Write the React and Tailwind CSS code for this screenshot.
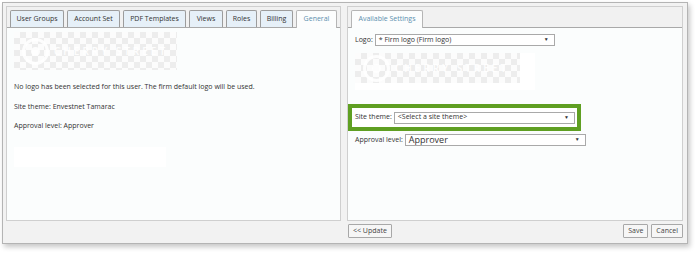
import React from 'react'

const checker =
  'bg-[repeating-conic-gradient(#ededed_0_25%,#fcfcfc_0_50%)] bg-[length:12px_12px]'

function Tab({ label, w, active }) {
  return (
    <div
      className={`h-[17px] flex items-center justify-center border border-b-0 rounded-t-[2px] text-[7px] ${w} ${
        active
          ? 'bg-[#fcfdfd] border-[#b5b5b5] text-[#5b8fae] h-[18px] -mb-px'
          : 'bg-[#e6f0f8] border-[#9c9c9c] text-[#333]'
      }`}
    >
      {label}
    </div>
  )
}

function LogoMark() {
  return (
    <div className={`relative w-full h-full overflow-hidden flex items-center gap-[5px] pl-[8px] ${checker}`}>
      <div className="shrink-0 w-[27px] h-[27px] rounded-full border-[3px] border-white/90 flex items-center justify-center">
        <div className="w-[9px] h-[9px] rounded-full bg-white/90" />
      </div>
      <span className="whitespace-nowrap text-[10px] tracking-[3px] text-white/90 font-semibold">CHERRY STREET</span>
    </div>
  )
}

function Select({ children, w, big }) {
  return (
    <div
      className={`h-[12px] border border-[#a9a9a9] bg-white flex items-center justify-between pl-[3px] pr-[5px] ${w}`}
    >
      <span className={big ? 'text-[9px] text-[#333]' : 'text-[7px] text-[#333]'}>{children}</span>
      <span className="text-[5px] text-[#333]">▼</span>
    </div>
  )
}

function Button({ children }) {
  return (
    <div className="h-[14px] px-[4px] flex items-center border border-[#a8a8a8] bg-[#f6f6f6] text-[7px] text-[#444] rounded-[1px]">
      {children}
    </div>
  )
}

export default function App() {
  return (
    <div className="w-[697px] h-[253px] bg-white pt-[2px] pl-[2px] font-['Open_Sans',sans-serif] text-[#333]">
      <div className="w-[686px] h-[242px] border border-[#b4b4b4] bg-[#f2f2f2] shadow-[2px_3px_5px_rgba(0,0,0,0.22)] flex gap-[6px] pt-[3px] pl-[3px]">
        {/* left panel */}
        <div className="w-[335px] h-[215px] border border-[#cfcfcf] bg-[#fbfdfd] flex flex-col">
          <div className="h-[21px] bg-[#f1f1f1] border-b border-[#a9a9a9] flex items-end gap-[3px] pl-[3px]">
            <Tab label="User Groups" w="w-[54px]" />
            <Tab label="Account Set" w="w-[53px]" />
            <Tab label="PDF Templates" w="w-[63px]" />
            <Tab label="Views" w="w-[34px]" />
            <Tab label="Roles" w="w-[31px]" />
            <Tab label="Billing" w="w-[33px]" />
            <Tab label="General" w="w-[41px]" active />
          </div>
          <div className="pl-[7px] pt-[4px] flex flex-col">
            <div className="w-[163px] h-[38px] flex">
              <LogoMark />
            </div>
            <div className="text-[7px] mt-[12px] leading-[10px]">
              No logo has been selected for this user. The firm default logo will be used.
            </div>
            <div className="text-[7px] mt-[10px] leading-[10px]">Site theme: Envestnet Tamarac</div>
            <div className="text-[7px] mt-[9px] leading-[10px]">Approval level: Approver</div>
            <div className="w-[152px] h-[20px] bg-white mt-[16px]" />
          </div>
        </div>

        {/* right panel */}
        <div className="flex flex-col">
          <div className="w-[336px] h-[215px] border border-[#cfcfcf] bg-[#fbfdfd] flex flex-col">
            <div className="h-[21px] bg-[#f1f1f1] border-b border-[#a9a9a9] flex items-end pl-[3px]">
              <Tab label="Available Settings" w="w-[72px]" active />
            </div>
            <div className="flex flex-col pt-[6px]">
              <div className="flex items-center gap-[2px] pl-[7px]">
                <span className="text-[7px]">Logo:</span>
                <Select w="w-[180px]">* Firm logo (Firm logo)</Select>
              </div>
              <div className="ml-[7px] mt-[7px] w-[180px] h-[37px] bg-white flex items-start">
                <div className="w-[165px] h-[30px] flex">
                  <LogoMark />
                </div>
              </div>
              <div className="mt-[14px] ml-0 w-[233px] h-[27px] border-[4px] border-[#5f9f22] bg-white flex items-center gap-[2px] pl-[3px]">
                <span className="text-[7px]">Site theme:</span>
                <Select w="w-[181px]">&lt;Select a site theme&gt;</Select>
              </div>
              <div className="flex items-center gap-[2px] pl-[7px] mt-[3px]">
                <span className="text-[7px]">Approval level:</span>
                <Select w="w-[181px]" big>Approver</Select>
              </div>
            </div>
          </div>
          <div className="flex justify-between pl-[1px] pr-[0px] mt-[3px]">
            <Button>&lt;&lt; Update</Button>
            <div className="flex gap-[3px]">
              <Button>Save</Button>
              <Button>Cancel</Button>
            </div>
          </div>
        </div>
      </div>
    </div>
  )
}
